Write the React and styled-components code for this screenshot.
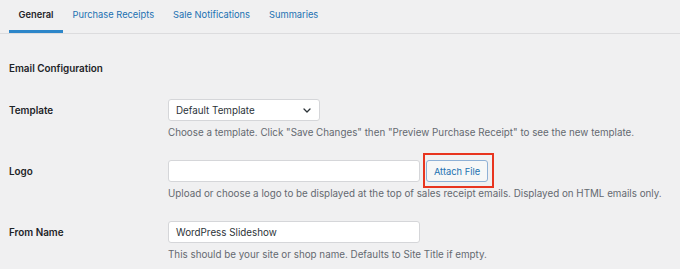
import React from "react";
import styled, { createGlobalStyle } from "styled-components";

const GlobalStyle = createGlobalStyle`
  html, body {
    margin: 0;
    padding: 0;
    background: #f0f0f1;
  }
  body {
    font-family: Inter, "Liberation Sans", sans-serif;
    color: #1d2327;
    -webkit-font-smoothing: antialiased;
  }
`;

const Page = styled.div`
  padding: 0 0 0 9px;
  width: 680px;
  height: 269px;
  box-sizing: border-box;
  overflow: hidden;
`;

const TabBar = styled.nav`
  display: flex;
  height: 33px;
  margin-left: -9px;
  padding-left: 9px;
  border-bottom: 1px solid #dcdcde;
`;

const Tab = styled.a`
  display: block;
  box-sizing: border-box;
  height: 33px;
  padding: 0 9.5px;
  line-height: 30px;
  font-size: 9.3px;
  font-weight: ${(p) => (p.$active ? 600 : 400)};
  color: ${(p) => (p.$active ? "#1d2327" : "#2271b1")};
  border-bottom: 3px solid ${(p) => (p.$active ? "#2c86c9" : "transparent")};
  text-decoration: none;
  white-space: nowrap;
`;

const SectionTitle = styled.h2`
  margin: 27px 0 0;
  font-size: 9.9px;
  font-weight: 600;
  line-height: 14px;
  color: #1d2327;
`;

const Form = styled.div`
  display: grid;
  grid-template-columns: 159px 1fr;
  row-gap: 21px;
  margin-top: 24px;
`;

const Label = styled.div`
  font-size: 9.9px;
  font-weight: 600;
  line-height: 22px;
  color: #1d2327;
`;

const Field = styled.div`
  display: flex;
  flex-direction: column;
  align-items: flex-start;
`;

const Controls = styled.div`
  display: flex;
  align-items: center;
  gap: 6px;
`;

const Description = styled.p`
  margin: 4px 0 0;
  font-size: 9.82px;
  line-height: 14px;
  color: #646970;
  white-space: nowrap;
`;

const SelectBox = styled.div`
  display: flex;
  align-items: center;
  justify-content: space-between;
  box-sizing: border-box;
  width: 152px;
  height: 22px;
  padding: 0 8px 0 7px;
  background: #fff;
  border: 1px solid #d5d6d9;
  border-radius: 3px;
  font-size: 9.82px;
  color: #2c3338;
`;

const TextInput = styled.div`
  box-sizing: border-box;
  width: 252px;
  height: 22px;
  padding: 0 7px;
  background: #fff;
  border: 1px solid #d5d6d9;
  border-radius: 3px;
  font-size: 9.82px;
  line-height: 20px;
  color: #2c3338;
`;

const ButtonWrap = styled.span`
  position: relative;
  display: inline-flex;
`;

const Button = styled.button`
  box-sizing: border-box;
  height: 22px;
  width: 62px;
  padding: 0;
  background: #f6f7f7;
  border: 1px solid #8fb1d6;
  border-radius: 3px;
  font-family: Inter, "Liberation Sans", sans-serif;
  font-size: 9.3px;
  color: #2271b1;
  cursor: pointer;
`;

const Highlight = styled.span`
  position: absolute;
  top: -7px;
  left: -3px;
  right: -6px;
  bottom: -6px;
  border: 2px solid #e8351f;
  pointer-events: none;
`;

const Chevron = () => (
  <svg width="8" height="5" viewBox="0 0 8 5" aria-hidden="true">
    <path d="M1 1l3 3 3-3" fill="none" stroke="#2c3338" strokeWidth="1.3" strokeLinecap="round" strokeLinejoin="round" />
  </svg>
);

const tabs = ["General", "Purchase Receipts", "Sale Notifications", "Summaries"];

export default function App() {
  return (
    <Page>
      <GlobalStyle />
      <TabBar>
        {tabs.map((t, i) => (
          <Tab key={t} href="#" $active={i === 0}>
            {t}
          </Tab>
        ))}
      </TabBar>
      <SectionTitle>Email Configuration</SectionTitle>
      <Form>
        <Label>Template</Label>
        <Field>
          <SelectBox>
            <span>Default Template</span>
            <Chevron />
          </SelectBox>
          <Description>
            Choose a template. Click "Save Changes" then "Preview Purchase Receipt" to see the new template.
          </Description>
        </Field>

        <Label>Logo</Label>
        <Field>
          <Controls>
            <TextInput />
            <ButtonWrap>
              <Button type="button">Attach File</Button>
              <Highlight />
            </ButtonWrap>
          </Controls>
          <Description>
            Upload or choose a logo to be displayed at the top of sales receipt emails. Displayed on HTML emails only.
          </Description>
        </Field>

        <Label>From Name</Label>
        <Field>
          <TextInput>WordPress Slideshow</TextInput>
          <Description>This should be your site or shop name. Defaults to Site Title if empty.</Description>
        </Field>
      </Form>
    </Page>
  );
}
